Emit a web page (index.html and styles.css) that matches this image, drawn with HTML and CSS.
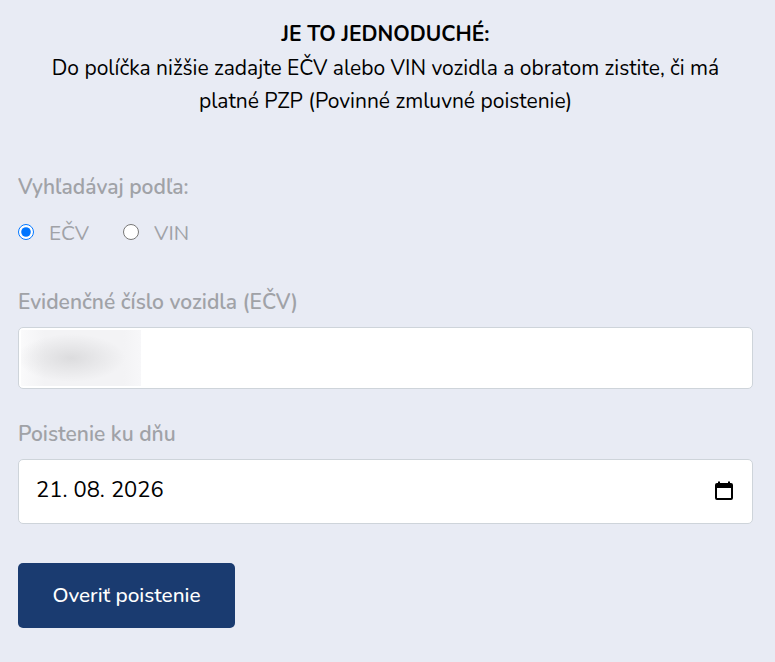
FILE: index.html
```html
<!DOCTYPE html>
<html lang="sk">

<head>
    <meta charset="UTF-8" />
    <meta name="viewport" content="width=device-width, initial-scale=1.0" />
    <link rel="stylesheet" href="styles.css">
    <title>Overenie PZP</title>
</head>

<body>
    <section class="main">
        <div class="intro">
            <strong>JE TO JEDNODUCHÉ:</strong><br />
            Do políčka nižšie zadajte EČV alebo VIN vozidla a obratom zistite, či má platné PZP (Povinné zmluvné poistenie)
        </div>
        <form class="form">
            <div class="search-by">
                <p class="label">Vyhľadávaj podľa:</p>
                <div class="radios">
                    <label class="radio"><input type="radio" name="type" checked /> EČV</label>
                    <label class="radio"><input type="radio" name="type" /> VIN</label>
                </div>
            </div>
            <div class="field">
                <label class="label">Evidenčné číslo vozidla (EČV)</label>
                <div class="input-box">
                    <div class="blur-patch"></div>
                </div>
            </div>
            <div class="field date-field">
                <label class="label">Poistenie ku dňu</label>
                <div class="input-box date-box">
                    <span class="date-value">21<span class="sep">.</span>08<span class="sep">.</span>2026</span>
                    <svg class="cal" viewBox="0 0 24 24" width="24" height="24">
                        <path d="M19 4h-1V2.5h-2V4H8V2.5H6V4H5a2 2 0 0 0-2 2v13a2 2 0 0 0 2 2h14a2 2 0 0 0 2-2V6a2 2 0 0 0-2-2zm0 15H5V9h14v10z" />
                    </svg>
                </div>
            </div>
            <button type="button" class="btn">Overiť poistenie</button>
        </form>
    </section>
</body>

</html>
```

FILE: styles.css
```css
* {
    margin: 0;
    padding: 0;
    box-sizing: border-box;
    font-family: "Nunito", "Noto Sans", "Open Sans", sans-serif;
}

body {
    background-color: #e8ebf4;
    height: 662px;
    overflow: hidden;
}

.main {
    padding: 18px 22px 0 18px;
}

.intro {
    padding: 0 16px;
    font-size: 21px;
    line-height: 33.6px;
    text-align: center;
    color: #000000;
}

.form {
    margin-top: 53px;
}

.label {
    display: block;
    font-size: 21px;
    line-height: 30px;
    font-weight: 600;
    color: #a0a2a7;
}

.radios {
    display: flex;
    gap: 34px;
    margin-top: 16px;
}

.radio {
    display: flex;
    align-items: center;
    gap: 15px;
    font-size: 20.8px;
    line-height: 30px;
    color: #a0a2a7;
}

.radio input {
    width: 16px;
    height: 16px;
    margin-bottom: 2px;
}

.field {
    margin-top: 39px;
}

.date-field {
    margin-top: 30px;
}

.input-box {
    margin-top: 10px;
    height: 62px;
    background-color: #ffffff;
    border: 1px solid #ced4da;
    border-radius: 5px;
    overflow: hidden;
}

.blur-patch {
    width: 120px;
    height: 56px;
    margin: 2px 0 0 2px;
    background:
        radial-gradient(ellipse 54px 24px at 50px 28px, #dcdcde, rgba(220, 220, 222, 0)),
        linear-gradient(to right, #fafafb, #f3f3f5 20%, #f3f3f5 85%, #f7f7f9);
}

.date-box {
    height: 65px;
    display: flex;
    align-items: center;
    justify-content: space-between;
    padding: 0 16px 0 17px;
}

.date-value {
    font-size: 22px;
    color: #000000;
    padding-bottom: 2px;
}

.sep {
    margin-right: 6px;
}

.btn {
    display: block;
    margin-top: 39px;
    width: 217px;
    height: 65px;
    border: none;
    border-radius: 5px;
    background-color: #1a3b70;
    color: #ffffff;
    font-size: 20.8px;
    font-weight: 500;
}
```
